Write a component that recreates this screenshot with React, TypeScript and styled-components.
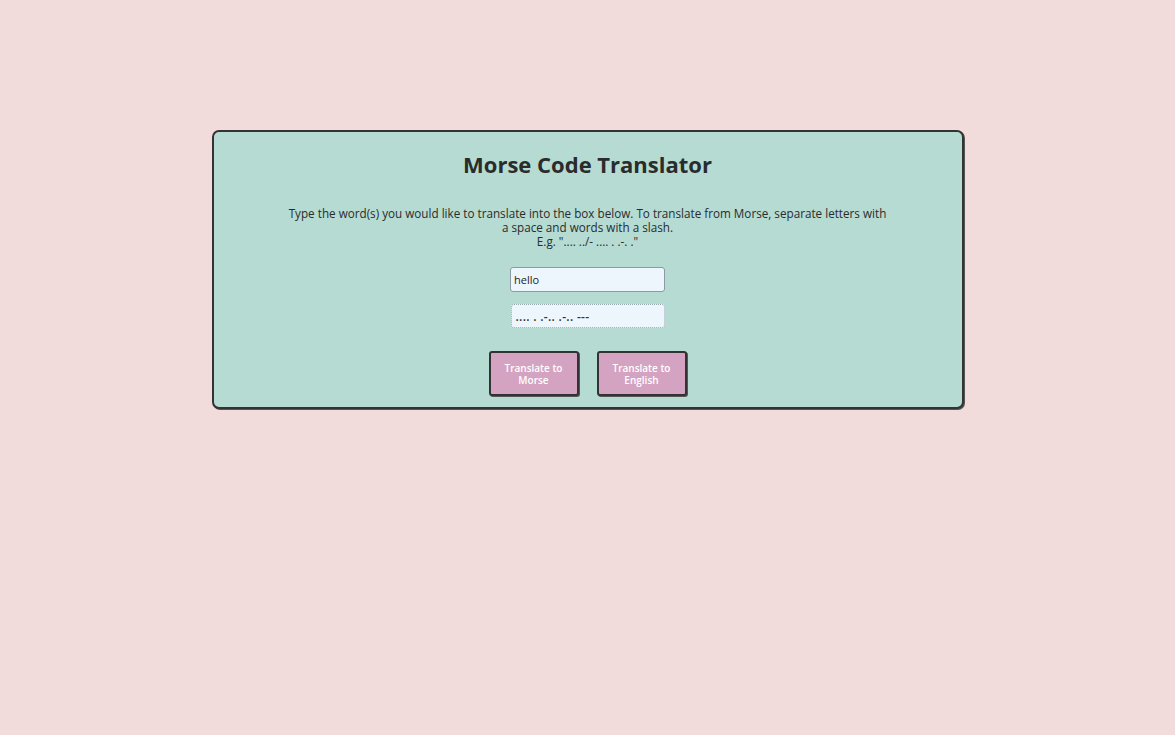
import styled, { createGlobalStyle } from "styled-components";

const GlobalStyle = createGlobalStyle`
  html {
    background-color: #f2dcdb;
  }
  body {
    margin: 0;
    font-family: "Open Sans", "DejaVu Sans", sans-serif;
    color: #2b2b2b;
  }
`;

const Page = styled.main`
  min-height: 508px;
  padding-top: 130px;
  box-sizing: border-box;
`;

const Card = styled.section`
  width: 752px;
  margin: 0 auto;
  box-sizing: border-box;
  background-color: #b5dbd3;
  border: 2px solid #333333;
  border-radius: 7px;
  box-shadow: 1px 1px 0 #555555;
  padding: 17px 0 11px;
  display: flex;
  flex-direction: column;
  align-items: center;
`;

const Title = styled.h1`
  margin: 0;
  font-size: 22px;
  font-weight: 700;
  line-height: 31px;
  color: #2b2b2b;
`;

const Instructions = styled.p`
  width: 604px;
  margin: 26px 0 0;
  text-align: center;
  font-size: 11.7px;
  line-height: 14px;
  color: #2b2b2b;
`;

const Fields = styled.div`
  display: flex;
  flex-direction: column;
  align-items: center;
  gap: 12px;
  margin-top: 19px;
`;

const TextInput = styled.input`
  width: 155px;
  height: 25px;
  box-sizing: border-box;
  padding: 0 3px;
  font-family: inherit;
  font-size: 11px;
  color: #222222;
  background-color: #eef6fd;
  border: 1px solid #8b9aa6;
  border-radius: 3px;
  outline: none;
`;

const Output = styled.div<{ $dotted?: boolean }>`
  width: 154px;
  height: 24px;
  box-sizing: border-box;
  padding: 0 4px;
  display: flex;
  align-items: center;
  font-size: 12px;
  font-weight: 600;
  letter-spacing: 0.3px;
  color: #333333;
  background-color: #eef6fd;
  border: 1px ${(p) => (p.$dotted ? "dotted" : "solid")} #9aa8b2;
  border-radius: 3px;
  white-space: pre;
`;

const Buttons = styled.div`
  display: flex;
  gap: 18px;
  margin-top: 23px;
`;

const Button = styled.button`
  width: 90px;
  height: 45px;
  box-sizing: border-box;
  padding: 0 10px;
  font-family: inherit;
  font-size: 10px;
  font-weight: 600;
  line-height: 12px;
  color: #ffffff;
  background-color: #d4a3c1;
  border: 2px solid #333333;
  border-radius: 3px;
  box-shadow: 1px 1px 0 #555555;
  cursor: pointer;
`;

export default function App() {
  return (
    <>
      <GlobalStyle />
      <Page>
        <Card>
          <Title>Morse Code Translator</Title>
          <Instructions>
            Type the word(s) you would like to translate into the box below. To
            translate from Morse, separate letters with a space and words with
            a slash.
            <br />
            E.g. ".... ../- .... . .-. ."
          </Instructions>
          <Fields>
            <TextInput defaultValue="hello" />
            <Output $dotted>{".... . .-.. .-.. ---"}</Output>
          </Fields>
          <Buttons>
            <Button type="button">Translate to Morse</Button>
            <Button type="button">Translate to English</Button>
          </Buttons>
        </Card>
      </Page>
    </>
  );
}
